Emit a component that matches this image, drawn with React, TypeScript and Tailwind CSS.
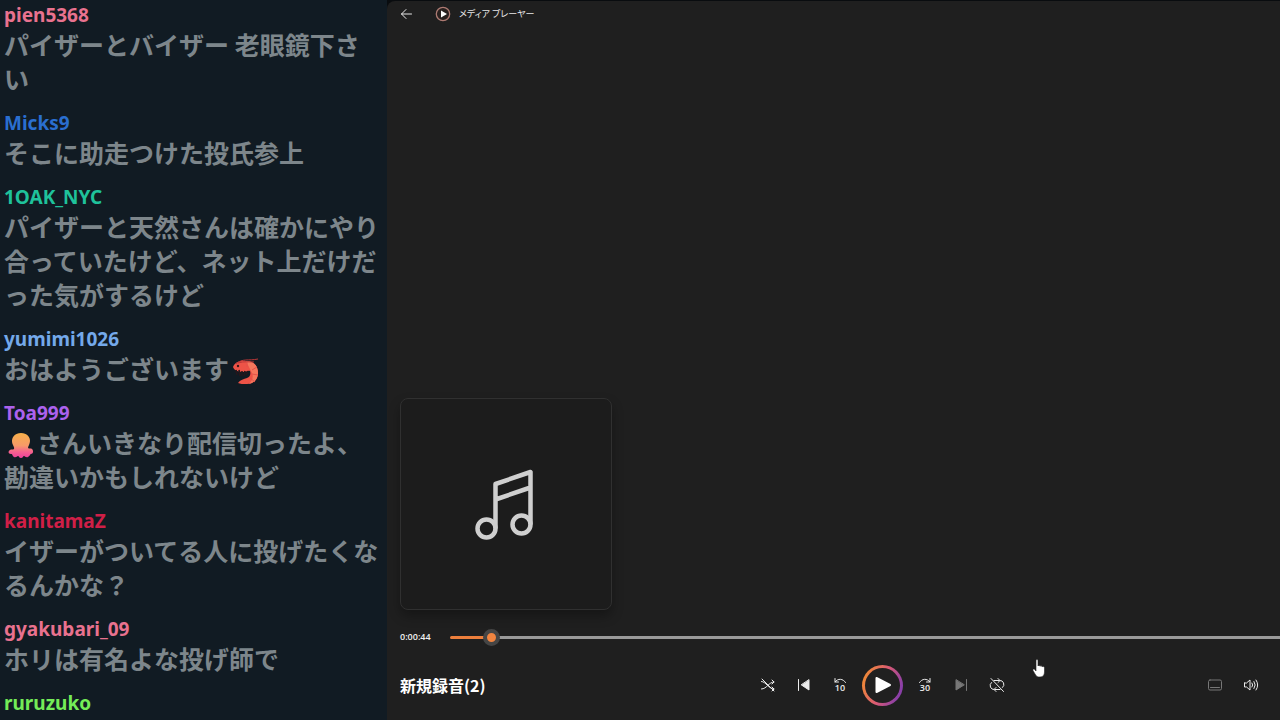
import type { ReactNode } from 'react';
import { useState } from 'react';
import { clsx } from 'clsx';

interface ChatMessage {
  user: string;
  color: string;
  body: ReactNode;
}

const DURATION = 1000;

function ShrimpEmote() {
  return (
    <svg viewBox="0 0 27 27" role="img" aria-label="shrimp" className="mx-[3px] inline-block size-[27px] align-[-6px]">
      <path d="M1 9C3 4 8 2 14 3c8 0 12 5 12 12 0 7-5 11-11 11-4 0-7 0-9-1 2-3 6-4 9-5 3-1 4-4 3-7-2-1-4 1-7 1C8 14 2 13 1 9z" fill="#ed5347" />
      <path d="M14 3c8 0 12 5 12 12 0 6-4 10-9 11 4-4 5-8 2-13" fill="#f4775c" />
      <path d="M20 12l5-3M20 16l6 1M18 20l5 4M15 9V4" stroke="#e2524a" strokeWidth="1" />
      <path d="M4 12l1 5M7 12l1 6M10 13v5M13 13l-1 5M16 13l-2 4" stroke="#25171c" strokeWidth="1.6" />
      <path d="M4 6C10 0 17 3 26 1M6 5c6-2 12-1 16-1" stroke="#b93838" strokeWidth="1" fill="none" />
      <circle cx="6" cy="8" r="1.2" fill="#3a1519" />
    </svg>
  );
}

function OctopusEmote() {
  return (
    <svg viewBox="0 0 27 27" role="img" aria-label="octopus" className="mx-[3px] inline-block size-[27px] align-[-6px]">
      <defs>
        <linearGradient id="octopus" x1="0" y1="0" x2="0" y2="1">
          <stop offset="0" stopColor="#f6b04a" />
          <stop offset="0.5" stopColor="#f89a68" />
          <stop offset="0.75" stopColor="#f5628f" />
          <stop offset="1" stopColor="#ee3f9b" />
        </linearGradient>
      </defs>
      <path
        d="M14 1c6 0 9 4 9 8 0 3-2 5-2 7 1 1 3 0 4 1 2 2 1 5-1 5-1 0-1 2-3 3-2 1-3-1-4-1s-1 2-3 2-2-2-3-2-2 2-4 1-1-3-3-3c-3 0-3-3-1-4 1-1 3 0 4-1 1-2-2-4-2-8 0-4 3-8 9-8z"
        fill="url(#octopus)"
      />
    </svg>
  );
}

const messages: ChatMessage[] = [
  { user: 'pien5368', color: 'text-[#e9728f]', body: 'パイザーとバイザー 老眼鏡下さい' },
  { user: 'Micks9', color: 'text-[#2a6fd0]', body: 'そこに助走つけた投氏参上' },
  {
    user: '1OAK_NYC',
    color: 'text-[#1fc29b]',
    body: 'パイザーと天然さんは確かにやり合っていたけど、ネット上だけだった気がするけど',
  },
  { user: 'yumimi1026', color: 'text-[#74a9ea]', body: <>おはようございます<ShrimpEmote /></> },
  { user: 'Toa999', color: 'text-[#ac62ee]', body: <><OctopusEmote />さんいきなり配信切ったよ、勘違いかもしれないけど</> },
  { user: 'kanitamaZ', color: 'text-[#d01f47]', body: 'イザーがついてる人に投げたくなるんかな？' },
  { user: 'gyakubari_09', color: 'text-[#e9728f]', body: 'ホリは有名よな投げ師で' },
  { user: 'ruruzuko', color: 'text-[#74ec58]', body: '' },
];

function ChatPanel() {
  return (
    <aside className="w-[387px] shrink-0 overflow-hidden bg-[#111b23] pr-2 pl-1">
      <ul className="flex flex-col gap-4 pt-[3px]">
        {messages.map((message) => (
          <li key={message.user}>
            <div className={clsx("font-['Noto_Sans',sans-serif] text-[19px] leading-[24px] font-bold", message.color)}>
              {message.user}
            </div>
            <p className="font-['Noto_Sans_CJK_JP',sans-serif] text-[25px] leading-[34px] font-bold break-all text-[#7d868b]">
              {message.body}
            </p>
          </li>
        ))}
      </ul>
    </aside>
  );
}

function ControlButton({ label, dim, children }: { label: string; dim?: boolean; children: ReactNode }) {
  return (
    <button
      type="button"
      aria-label={label}
      className={clsx('flex size-9 items-center justify-center', dim ? 'text-[#777777]' : 'text-[#ececec]')}
    >
      <svg viewBox="0 0 16 16" className="size-4 overflow-visible" fill="none" stroke="currentColor" strokeLinecap="round" strokeLinejoin="round">
        {children}
      </svg>
    </button>
  );
}

function TitleBar() {
  return (
    <header className="flex h-[26px] items-center px-[13px] text-[#e8e8e8]">
      <button type="button" aria-label="戻る" className="mr-[22px]">
        <svg viewBox="0 0 13 12" className="h-3 w-[13px]" fill="none" stroke="currentColor" strokeLinecap="round" strokeLinejoin="round">
          <path d="M11.5 6H1.5M6 1.5L1.5 6 6 10.5" />
        </svg>
      </button>
      <svg viewBox="0 0 16 16" className="size-4">
        <circle cx="8" cy="8" r="6.7" fill="#29211f" stroke="#ad7a72" strokeWidth="1.3" />
        <path d="M6 4.5v7L12 8z" fill="#fff" />
      </svg>
      <h1 className="ml-2 font-['Noto_Sans_CJK_JP',sans-serif] text-[9px] [font-feature-settings:'palt']">メディア プレーヤー</h1>
    </header>
  );
}

function SeekBar() {
  const [position, setPosition] = useState(41);
  const ratio = position / DURATION;
  return (
    <div className="flex h-[54px] items-center pl-[13px]">
      <label htmlFor="seek" className="w-[50px] shrink-0 font-['Open_Sans',sans-serif] text-[9px] font-semibold text-[#f0f0f0]">
        0:00:44
      </label>
      <input
        id="seek"
        type="range"
        min={0}
        max={DURATION}
        value={position}
        onChange={(e) => setPosition(Number(e.target.value))}
        className="h-[3px] min-w-0 flex-1 appearance-none rounded-l-full bg-[#9a9a9a] [&::-webkit-slider-thumb]:size-[17px] [&::-webkit-slider-thumb]:appearance-none [&::-webkit-slider-thumb]:rounded-full [&::-webkit-slider-thumb]:border-4 [&::-webkit-slider-thumb]:border-[#454545] [&::-webkit-slider-thumb]:bg-[#f08440]"
        style={{
          backgroundImage: 'linear-gradient(#ec7f3c, #ec7f3c)',
          backgroundSize: `${ratio * 100 + 1}% 100%`,
          backgroundRepeat: 'no-repeat',
        }}
      />
    </div>
  );
}

function Transport() {
  return (
    <div className="flex h-[42px] items-center pr-[11px] pl-[13px]">
      <h2 className="w-[350px] shrink-0 font-['Noto_Sans_CJK_JP',sans-serif] text-[16px] font-bold text-white">新規録音(2)</h2>
      <div className="flex items-center">
        <ControlButton label="シャッフル">
          <path d="M1.500 4.500c4.500 0 7 7.500 12.500 7.500M1.500 12C7 12 8.500 5 14 5M12 3l2 2-2 2M12 10l2 2-2 2" />
          <path d="M2 2l12 12" />
        </ControlButton>
        <ControlButton label="前へ">
          <path d="M2.5 2.5v11" />
          <path d="M13 3v10L5.5 8z" fill="currentColor" />
        </ControlButton>
        <ControlButton label="10 秒戻る">
          <path d="M3 1.500v3.500h3.500M3 5c3-4 8-3.500 10.500 0.500" />
          <text x="8" y="14" textAnchor="middle" fill="currentColor" stroke="none" fontSize="9" fontWeight="600" fontFamily="Open Sans, sans-serif">10</text>
        </ControlButton>
        <button
          type="button"
          aria-label="再生"
          className="mx-1 size-[41px] rounded-full bg-[linear-gradient(110deg,#f08a35_10%,#d95a75_50%,#8a3fa8_85%)] p-[3px]"
        >
          <span className="flex size-full items-center justify-center rounded-full bg-[#202020]">
            <svg viewBox="0 0 18 18" className="size-[18px]">
              <path d="M2.500 2v14L16 9z" fill="#fff" stroke="#fff" strokeWidth="2" strokeLinejoin="round" />
            </svg>
          </span>
        </button>
        <ControlButton label="30 秒進む">
          <path d="M13 1.500v3.500H9.500M13 5C10 1 5 1.500 2.500 5.500" />
          <text x="8" y="14" textAnchor="middle" fill="currentColor" stroke="none" fontSize="9" fontWeight="600" fontFamily="Open Sans, sans-serif">30</text>
        </ControlButton>
        <ControlButton label="次へ" dim>
          <path d="M13.500 2.500v11" />
          <path d="M3 3v10l8-5z" fill="currentColor" />
        </ControlButton>
        <ControlButton label="リピート">
          <path d="M5 3.500h5.500a4 4 0 0 1 3 7M11 12.500H5.500a4 4 0 0 1-3-7M9 1.500l2 2-2 2M7 10.500l-2 2 2 2" />
          <path d="M2 1.500l12.500 13" />
        </ControlButton>
      </div>
      <div className="ml-auto flex items-center">
        <ControlButton label="字幕" dim>
          <rect x="1.500" y="3" width="13" height="10" rx="1.500" />
          <path d="M3.500 10.500h9" />
        </ControlButton>
        <ControlButton label="音量">
          <path d="M1.500 6v4h2L7 13V3L3.500 6zM9 6q1.500 2 0 4M11 4.500q2.500 3.500 0 7M13 3q3.500 5 0 10" />
        </ControlButton>
      </div>
    </div>
  );
}

function MediaPlayer() {
  return (
    <main className="mt-px flex min-w-0 flex-1 flex-col rounded-tl-lg bg-[#1f1f1f] pb-[14px]">
      <TitleBar />
      <div className="flex flex-1 items-end pl-[13px]">
        <div className="flex size-[212px] items-center justify-center rounded-lg border border-[#303030] bg-[#1c1c1c] shadow-[0_6px_12px_rgba(0,0,0,0.3)]">
          <svg viewBox="0 0 60 72" className="h-[72px] w-[60px] overflow-visible" fill="none" stroke="#cfcfcf" strokeWidth="4.500" strokeLinejoin="round">
            <circle cx="10.500" cy="60.500" r="9" />
            <circle cx="45.500" cy="56.500" r="9" />
            <path d="M19.500 60.500V16L54.500 4v52.500M19.500 31.500l35-12" />
          </svg>
        </div>
      </div>
      <SeekBar />
      <Transport />
    </main>
  );
}

function HandCursor() {
  return (
    <svg viewBox="0 0 14 19" aria-hidden="true" className="pointer-events-none absolute top-[659px] left-[1032px] h-[19px] w-[14px]">
      <path
        d="M4 1.500c0-1.300 2-1.300 2 0V7c.2-.9 2-.8 2 .3.300-.8 2.100-.6 2.100.6.300-.8 2.400-.5 2.400.9V13c0 3-1.500 5-4.500 5S4.500 17.500 3 15L1 11.500c-.6-1.200.9-2 1.700-1.100L4 12z"
        fill="#fff"
        stroke="#222"
        strokeWidth="0.600"
      />
    </svg>
  );
}

export default function App() {
  return (
    <div className="relative flex h-screen overflow-hidden bg-[#090c0f]">
      <ChatPanel />
      <MediaPlayer />
      <HandCursor />
    </div>
  );
}
